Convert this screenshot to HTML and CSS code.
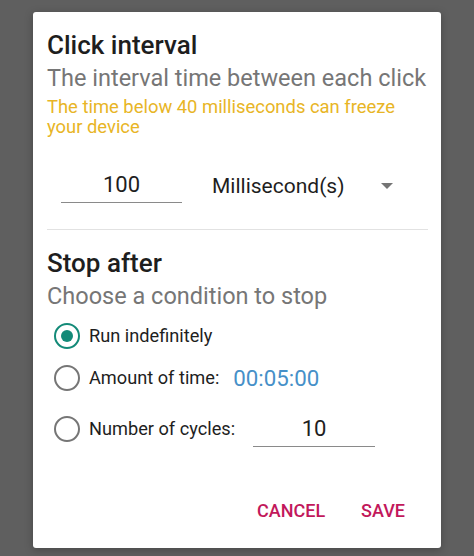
FILE: index.html
```html
<!DOCTYPE html>
<html>
<head>
<meta charset="utf-8">
<link rel="stylesheet" href="styles.css">
</head>
<body>
<div class="dialog">
  <div class="title">Click interval</div>
  <div class="subtitle">The interval time between each click</div>
  <div class="warning">The time below 40 milliseconds can freeze<br>your device</div>
  <div class="interval-row">
    <div class="field field-interval">100</div>
    <div class="select">
      <span class="select-text">Millisecond(s)</span>
      <span class="caret"></span>
    </div>
  </div>
  <div class="divider"></div>
  <div class="title title-stop">Stop after</div>
  <div class="subtitle">Choose a condition to stop</div>
  <div class="radios">
    <div class="radio-row">
      <span class="radio checked"></span>
      <span class="radio-label">Run indefinitely</span>
    </div>
    <div class="radio-row">
      <span class="radio"></span>
      <span class="radio-label">Amount of time:</span>
      <span class="time">00:05:00</span>
    </div>
    <div class="radio-row radio-row-cycles">
      <span class="radio"></span>
      <span class="radio-label">Number of cycles:</span>
      <div class="field field-cycles">10</div>
    </div>
  </div>
  <div class="actions">
    <span class="btn">CANCEL</span>
    <span class="btn">SAVE</span>
  </div>
</div>
</body>
</html>
```

FILE: styles.css
```css
html, body {
  margin: 0;
  padding: 0;
}
body {
  background: #5f5f5f;
  font-family: Roboto, "Noto Sans", "Liberation Sans", sans-serif;
  width: 474px;
  height: 556px;
  overflow: hidden;
}
.dialog {
  box-sizing: border-box;
  margin: 12px 0 0 33px;
  width: 408px;
  height: 536px;
  background: #ffffff;
  border-radius: 3px;
  padding: 19px 13px 19px 14px;
  display: flex;
  flex-direction: column;
  box-shadow: 0 2px 8px rgba(0,0,0,0.25);
}
.title {
  font-size: 26px;
  line-height: 28px;
  font-weight: 500;
  color: #1e1e1e;
}
.subtitle {
  font-size: 23.5px;
  line-height: 26px;
  color: #767676;
  margin-top: 6px;
  white-space: nowrap;
}
.warning {
  font-size: 18.4px;
  line-height: 20px;
  color: #e8b526;
  margin-top: 5.5px;
  white-space: nowrap;
}
.interval-row {
  display: flex;
  align-items: center;
  margin-top: 31.5px;
  padding-left: 14px;
}
.field {
  box-sizing: border-box;
  width: 121px;
  text-align: center;
  font-size: 22px;
  line-height: 26px;
  color: #1e1e1e;
  padding: 4px 0 4px;
  border-bottom: 1.5px solid #8a8a8a;
}
.select {
  flex: 1;
  display: flex;
  align-items: center;
  justify-content: space-between;
  margin-left: 30px;
  padding-right: 35px;
  font-size: 21px;
  line-height: 26px;
  color: #1e1e1e;
}
.caret {
  width: 0;
  height: 0;
  border-left: 6px solid transparent;
  border-right: 6px solid transparent;
  border-top: 6px solid #757575;
}
.divider {
  height: 1px;
  background: #e2e2e2;
  margin-top: 25.5px;
}
.title-stop {
  margin-top: 19px;
}
.radios {
  display: flex;
  flex-direction: column;
  margin-top: 6.5px;
  padding-left: 7px;
}
.radio-row {
  display: flex;
  align-items: center;
  min-height: 42px;
}
.radio-row-cycles {
  margin-top: 9px;
}
.radio {
  box-sizing: border-box;
  width: 26px;
  height: 26px;
  border-radius: 50%;
  border: 2.5px solid #767676;
  display: flex;
  align-items: center;
  justify-content: center;
  flex: none;
}
.radio.checked {
  border-color: #138a78;
}
.radio.checked::after {
  content: "";
  width: 12px;
  height: 12px;
  border-radius: 50%;
  background: #138a78;
}
.radio-label {
  margin-left: 9px;
  font-size: 18.2px;
  line-height: 24px;
  color: #1e1e1e;
}
.time {
  margin-left: 14px;
  font-size: 22.3px;
  line-height: 26px;
  color: #4690c8;
}
.field-cycles {
  margin-left: 18px;
  width: 122px;
}
.actions {
  margin-top: auto;
  display: flex;
  justify-content: flex-end;
  gap: 16px;
  padding-right: 13px;
}
.btn {
  padding: 8px 10px;
  font-size: 18px;
  line-height: 20px;
  font-weight: 500;
  color: #c2185b;
}
```
